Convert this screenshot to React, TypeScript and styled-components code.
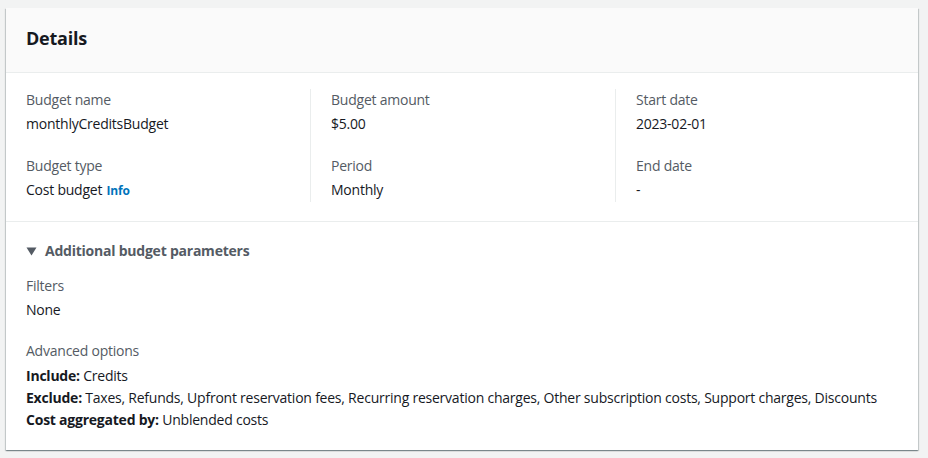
import React from "react";
import styled, { createGlobalStyle } from "styled-components";

const Global = createGlobalStyle`
  html, body { margin: 0; padding: 0; background: #f2f3f3; }
  body {
    font-family: "Open Sans", "Noto Sans", Arial, sans-serif;
    color: #16191f;
    letter-spacing: -0.23px;
  }
  * { box-sizing: border-box; }
`;

const Page = styled.div`
  padding: 8px 10px 8px 6px;
  width: 928px;
  height: 458px;
`;

const Card = styled.section`
  background: #fff;
  box-shadow: 0 1px 1px 0 rgba(0, 28, 36, 0.3), 1px 1px 1px 0 rgba(0, 28, 36, 0.15),
    -1px 1px 1px 0 rgba(0, 28, 36, 0.15);
  width: 912px;
`;

const Header = styled.header`
  background: #fafafa;
  border-bottom: 1px solid #eaeded;
  height: 65px;
  padding: 0 20px 4px;
  display: flex;
  align-items: center;
`;

const Title = styled.h2`
  margin: 0;
  font-size: 18px;
  font-weight: 700;
  line-height: 22px;
  color: #16191f;
`;

const Grid = styled.div`
  display: grid;
  grid-template-columns: 284px 305px 1fr;
  padding: 16px 0 19px 20px;
  border-bottom: 1px solid #eaeded;
`;

const Column = styled.div<{ $divider?: boolean }>`
  display: flex;
  flex-direction: column;
  gap: 20px;
  padding-left: ${(p) => (p.$divider ? "20px" : "0")};
  border-left: ${(p) => (p.$divider ? "1px solid #eaeded" : "none")};
`;

const Field = styled.div`
  display: flex;
  flex-direction: column;
  gap: 2px;
`;

const Label = styled.div`
  font-size: 14px;
  line-height: 22px;
  color: #545b64;
`;

const Value = styled.div`
  font-size: 14px;
  line-height: 22px;
  color: #16191f;
`;

const InfoLink = styled.a`
  font-size: 12px;
  font-weight: 700;
  color: #0073bb;
  text-decoration: none;
  margin-left: 1px;
`;

const Section = styled.div`
  padding: 18px 20px 19px;
`;

const Toggle = styled.div`
  display: flex;
  align-items: center;
  gap: 8px;
  font-size: 14px;
  font-weight: 700;
  line-height: 22px;
  color: #545b64;
  margin-bottom: 13px;
`;

const Block = styled.div<{ $labelGap: number }>`
  display: flex;
  flex-direction: column;
  margin-bottom: 19px;
  &:last-child { margin-bottom: 0; }
  & > :first-child { margin-bottom: ${(p) => p.$labelGap}px; }
`;

const Line = styled.div`
  font-size: 14px;
  line-height: 22px;
  color: #16191f;
  white-space: nowrap;
`;

const Strong = styled.b`
  font-weight: 700;
`;

export default function App() {
  return (
    <>
      <Global />
      <Page>
        <Card>
          <Header>
            <Title>Details</Title>
          </Header>
          <Grid>
            <Column>
              <Field>
                <Label>Budget name</Label>
                <Value>monthlyCreditsBudget</Value>
              </Field>
              <Field>
                <Label>Budget type</Label>
                <Value>
                  Cost budget <InfoLink href="#">Info</InfoLink>
                </Value>
              </Field>
            </Column>
            <Column $divider>
              <Field>
                <Label>Budget amount</Label>
                <Value>$5.00</Value>
              </Field>
              <Field>
                <Label>Period</Label>
                <Value>Monthly</Value>
              </Field>
            </Column>
            <Column $divider>
              <Field>
                <Label>Start date</Label>
                <Value>2023-02-01</Value>
              </Field>
              <Field>
                <Label>End date</Label>
                <Value>-</Value>
              </Field>
            </Column>
          </Grid>
          <Section>
            <Toggle>
              <svg width="11" height="9" viewBox="0 0 11 9">
                <path d="M0.5 0.5 L10.5 0.5 L5.5 8.5 Z" fill="#545b64" />
              </svg>
              Additional budget parameters
            </Toggle>
            <Block $labelGap={2}>
              <Label>Filters</Label>
              <Value>None</Value>
            </Block>
            <Block $labelGap={3}>
              <Label>Advanced options</Label>
              <Line>
                <Strong>Include:</Strong> Credits
              </Line>
              <Line>
                <Strong>Exclude:</Strong> Taxes, Refunds, Upfront reservation fees, Recurring reservation charges, Other subscription costs, Support charges, Discounts
              </Line>
              <Line>
                <Strong>Cost aggregated by:</Strong> Unblended costs
              </Line>
            </Block>
          </Section>
        </Card>
      </Page>
    </>
  );
}
